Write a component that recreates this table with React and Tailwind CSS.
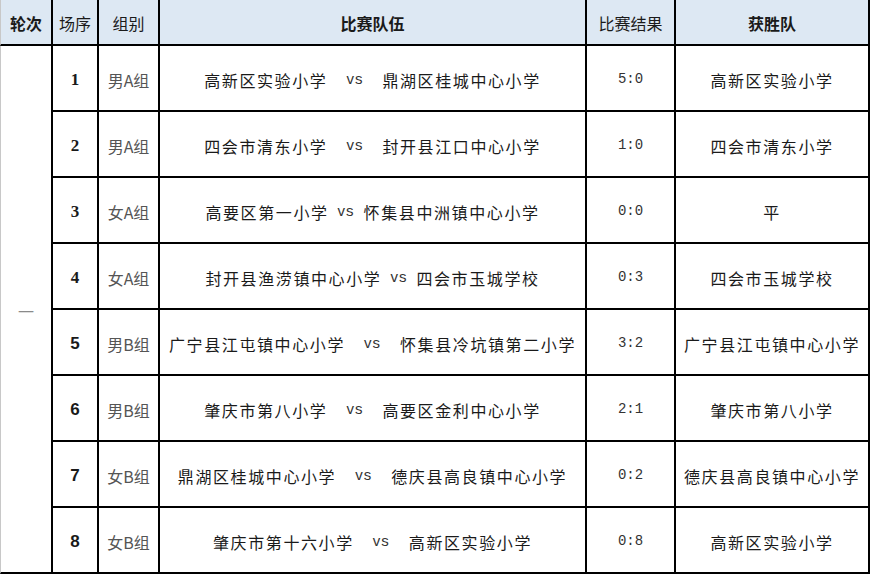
import React from 'react';

const matches = [
  { no: '1', serif: true, group: '男A组', a: '高新区实验小学', b: '鼎湖区桂城中心小学', gap: 'gap-[19px]', score: '5:0', winner: '高新区实验小学' },
  { no: '2', serif: true, group: '男A组', a: '四会市清东小学', b: '封开县江口中心小学', gap: 'gap-[19px]', score: '1:0', winner: '四会市清东小学' },
  { no: '3', serif: true, group: '女A组', a: '高要区第一小学', b: '怀集县中洲镇中心小学', gap: 'gap-[9px]', score: '0:0', winner: '平' },
  { no: '4', serif: true, group: '女A组', a: '封开县渔涝镇中心小学', b: '四会市玉城学校', gap: 'gap-[9px]', score: '0:3', winner: '四会市玉城学校' },
  { no: '5', serif: false, group: '男B组', a: '广宁县江屯镇中心小学', b: '怀集县冷坑镇第二小学', gap: 'gap-[19px]', score: '3:2', winner: '广宁县江屯镇中心小学' },
  { no: '6', serif: false, group: '男B组', a: '肇庆市第八小学', b: '高要区金利中心小学', gap: 'gap-[19px]', score: '2:1', winner: '肇庆市第八小学' },
  { no: '7', serif: false, group: '女B组', a: '鼎湖区桂城中心小学', b: '德庆县高良镇中心小学', gap: 'gap-[19px]', score: '0:2', winner: '德庆县高良镇中心小学' },
  { no: '8', serif: false, group: '女B组', a: '肇庆市第十六小学', b: '高新区实验小学', gap: 'gap-[19px]', score: '0:8', winner: '高新区实验小学' },
];

const cjk = "font-['Noto_Sans_CJK_SC',sans-serif]";
const head = 'flex items-center justify-center bg-[#dde8f3] border-r-2 border-b-2 border-black text-[16px] pt-[2px]';
const cell = 'flex items-center justify-center border-r-2 border-b-2 border-black pt-[3px]';

export default function App() {
  return (
    <div className={`w-[870px] h-[575px] bg-white text-[#1a1a1a] ${cjk}`}>
      <div className="grid grid-cols-[53px_46px_61px_427px_89px_194px] grid-rows-[46px_repeat(8,66px)] w-[870px]">
        {/* header */}
        <div className={`${head} border-l border-l-[#c8c8c8] font-bold`}>轮次</div>
        <div className={head}>场序</div>
        <div className={head}>组别</div>
        <div className={`${head} font-bold`}>比赛队伍</div>
        <div className={head}>比赛结果</div>
        <div className={`${head} font-bold`}>获胜队</div>

        {/* round column */}
        <div className="row-span-8 row-start-2 col-start-1 flex items-center justify-center border-l border-l-[#c8c8c8] border-r-2 border-b-2 border-black pt-[4px] text-[16px] text-[#8a8a8a]">
          一
        </div>

        {matches.map((m) => (
          <React.Fragment key={m.no}>
            <div className={`col-start-2 ${cell} text-[17px] font-bold ${m.serif ? "font-['Liberation_Serif',serif]" : "font-['Liberation_Sans',sans-serif]"}`}>
              {m.no}
            </div>
            <div className={`${cell} text-[16px] text-[#555]`}>
              {m.group}
            </div>
            <div className={`${cell} ${m.gap} text-[16px] tracking-[1.6px] text-[#1a1a1a]`}>
              <span>{m.a}</span>
              <span className="font-['Liberation_Sans',sans-serif] text-[15px] tracking-[1px] text-[#333]">vs</span>
              <span>{m.b}</span>
            </div>
            <div className={`${cell} font-['Liberation_Mono',monospace] text-[14px] text-[#333]`}>
              {m.score}
            </div>
            <div className={`${cell} text-[16px] tracking-[1.6px] text-[#1a1a1a]`}>
              {m.winner}
            </div>
          </React.Fragment>
        ))}
      </div>
    </div>
  );
}
